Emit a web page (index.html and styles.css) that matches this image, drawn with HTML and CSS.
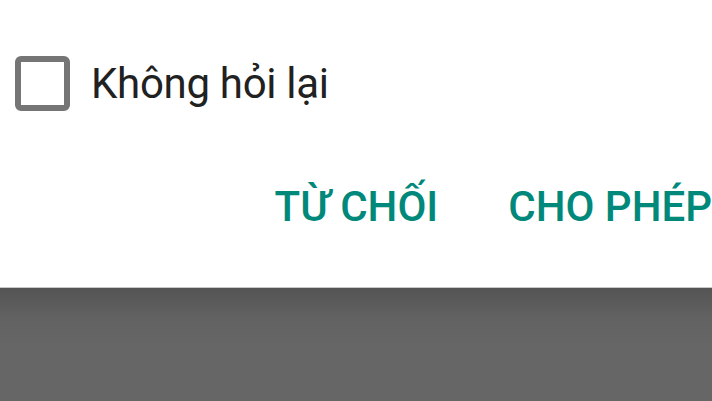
FILE: index.html
```html
<!DOCTYPE html>
<html lang="vi">
<head>
<meta charset="utf-8">
<link rel="stylesheet" href="styles.css">
</head>
<body>
<div class="dialog">
  <label class="check-row">
    <span class="box"></span>
    <span class="check-label">Không hỏi lại</span>
  </label>
  <div class="actions">
    <span class="btn">TỪ CHỐI</span>
    <span class="btn">CHO PHÉP</span>
  </div>
</div>
<div class="scrim"></div>
</body>
</html>
```

FILE: styles.css
```css
html, body {
  margin: 0;
  padding: 0;
  height: 100%;
  overflow: hidden;
  background: #ffffff;
  font-family: Roboto, "Noto Sans", sans-serif;
}
body {
  display: flex;
  flex-direction: column;
}
.dialog {
  height: 287px;
  flex: none;
  background: #ffffff;
  display: flex;
  flex-direction: column;
}
.check-row {
  display: flex;
  align-items: center;
  padding-top: 56px;
  padding-left: 15px;
  height: 55px;
}
.box {
  width: 55px;
  height: 55px;
  box-sizing: border-box;
  border: 6px solid #757575;
  border-radius: 6px;
  flex: none;
}
.check-label {
  margin-left: 21px;
  font-size: 42px;
  letter-spacing: -0.3px;
  color: #212121;
  line-height: 55px;
}
.actions {
  display: flex;
  justify-content: flex-end;
  gap: 70px;
  margin-top: 70px;
  padding-right: 0;
}
.btn {
  font-size: 42px;
  font-weight: 500;
  color: #00897b;
  line-height: 52px;
}
.scrim {
  flex: 1;
  border-top: 1px solid #c8c8c8;
  background: linear-gradient(#545454, #626262 30px, #666666 60px);
}
```
